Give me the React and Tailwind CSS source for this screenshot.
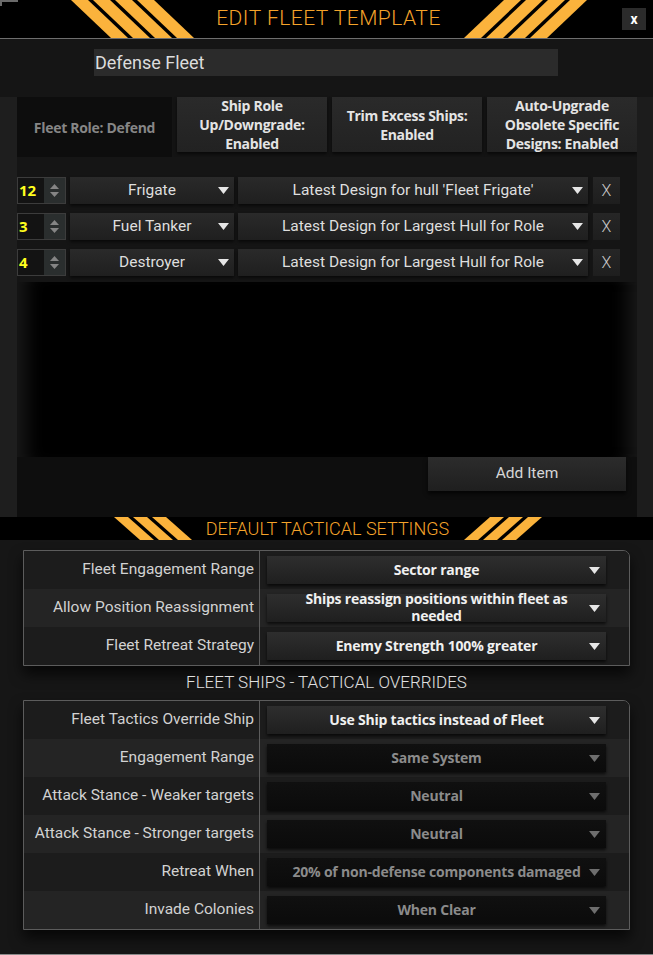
import React from 'react';

const Stripes = ({ dir, h, n, d, sw, s }) => {
  const w = (n - 1) * d + sw + s;
  const polys = [];
  for (let i = 0; i < n; i++) {
    const x = i * d;
    const pts =
      dir === 'left'
        ? `${x},0 ${x + sw},0 ${x + sw + s},${h} ${x + s},${h}`
        : `${x + s},0 ${x + s + sw},0 ${x + sw},${h} ${x},${h}`;
    polys.push(<polygon key={i} points={pts} fill="#fbb33c" />);
  }
  return (
    <svg width={w} height={h} viewBox={`0 0 ${w} ${h}`} className="block shrink-0">
      {polys}
    </svg>
  );
};

const Arrow = ({ color = '#e6e6e6' }) => (
  <svg width="11" height="7" viewBox="0 0 11 7" className="shrink-0">
    <polygon points="0,0 11,0 5.5,7" fill={color} />
  </svg>
);

const shipRows = [
  { qty: '12', role: 'Frigate', design: "Latest Design for hull 'Fleet Frigate'" },
  { qty: '3', role: 'Fuel Tanker', design: 'Latest Design for Largest Hull for Role' },
  { qty: '4', role: 'Destroyer', design: 'Latest Design for Largest Hull for Role' },
];

const fleetSettings = [
  { label: 'Fleet Engagement Range', value: 'Sector range' },
  { label: 'Allow Position Reassignment', value: 'Ships reassign positions within fleet as needed' },
  { label: 'Fleet Retreat Strategy', value: 'Enemy Strength 100% greater' },
];

const overrides = [
  { label: 'Fleet Tactics Override Ship', value: 'Use Ship tactics instead of Fleet' },
  { label: 'Engagement Range', value: 'Same System', disabled: true },
  { label: 'Attack Stance - Weaker targets', value: 'Neutral', disabled: true },
  { label: 'Attack Stance - Stronger targets', value: 'Neutral', disabled: true },
  { label: 'Retreat When', value: '20% of non-defense components damaged', disabled: true },
  { label: 'Invade Colonies', value: 'When Clear', disabled: true },
];

const SettingsTable = ({ rows }) => (
  <div className="mx-[23px] w-[607px] border border-[#5c5c5c] rounded-tr-[7px] overflow-hidden shadow-[0_8px_14px_rgba(0,0,0,0.7)]">
    {rows.map((row, i) => (
      <div
        key={row.label}
        className={`flex h-[38px] ${i % 2 === 0 ? 'bg-[#1c1c1c]' : 'bg-[#242424]'}`}
      >
        <div className="w-[236px] shrink-0 border-r border-[#5c5c5c] flex items-center justify-end pr-[5px] text-[15.5px] text-[#d2d2d2] whitespace-nowrap">
          {row.label}
        </div>
        <div className="flex-1 flex items-center pl-[7px] pr-[23px]">
          <div
            className={`flex-1 h-[28px] flex items-center pl-[17px] pr-[6px] shadow-[0_2px_3px_rgba(0,0,0,0.7)] ${
              row.disabled
                ? 'bg-gradient-to-b from-[#101010] to-[#0b0b0b]'
                : 'bg-gradient-to-b from-[#2e2e2e] to-[#1f1f1f]'
            }`}
          >
            <div
              className={`flex-1 text-center font-['Open_Sans',sans-serif] font-bold text-[14px] leading-[17px] tracking-[-0.2px] pb-[2px] ${
                row.disabled ? 'text-[#8b8b8b]' : 'text-[#f0f0f0]'
              }`}
            >
              {row.value}
            </div>
            <Arrow color={row.disabled ? '#6e6e6e' : '#e6e6e6'} />
          </div>
        </div>
      </div>
    ))}
  </div>
);

export default function App() {
  return (
    <div className="w-[653px] h-[955px] bg-[#1b1b1b] font-['Roboto',sans-serif] relative overflow-hidden flex flex-col">
      {/* corner bracket */}
      <div className="absolute left-0 top-0 w-[18px] h-[6px] border-l-2 border-t-2 border-[#6a6a6a]" />

      {/* Header */}
      <div className="h-[39px] shrink-0 bg-black border-b border-[#6e6e6e] flex items-center justify-center pl-[4px] gap-[20px]">
        <Stripes dir="left" h={38} n={4} d={22} sw={17} s={40} />
        <div className="w-[230px] text-center text-[21px] font-light tracking-[0.5px] text-[#f5a32a] whitespace-nowrap">
          EDIT FLEET TEMPLATE
        </div>
        <Stripes dir="right" h={38} n={4} d={22} sw={17} s={40} />
      </div>
      <button className="absolute right-[7px] top-[8px] w-[24px] h-[22px] bg-[#2b2b2b] text-white font-bold text-[14px] leading-none flex items-center justify-center">
        x
      </button>

      {/* Name */}
      <div className="h-[58px] shrink-0 bg-[#151515] pt-[10px] pl-[94px]">
        <div className="w-[464px] h-[27px] bg-[#2b2b2b] flex items-center pl-[1px] text-[18px] text-[#dcdcdc]">
          Defense Fleet
        </div>
      </div>

      {/* Template panel */}
      <div className="shrink-0 flex">
        <div className="w-[17px] bg-[#1e1e1e]" />
        <div className="w-[620px] flex flex-col">
          {/* options row */}
          <div className="h-[60px] bg-[#141414] flex gap-[4px] font-['Open_Sans',sans-serif] font-bold text-[14px] tracking-[-0.3px]">
            <div className="w-[155px] bg-[#0d0d0d] flex items-center justify-center text-[#868686]">
              Fleet Role: Defend
            </div>
            {[
              ['Ship Role', 'Up/Downgrade:', 'Enabled'],
              ['Trim Excess Ships:', 'Enabled'],
              ['Auto-Upgrade', 'Obsolete Specific', 'Designs: Enabled'],
            ].map((lines, i) => (
              <div
                key={i}
                className="w-[150px] h-[55px] ml-[1px] bg-gradient-to-b from-[#2a2a2a] to-[#222222] shadow-[0_2px_3px_rgba(0,0,0,0.6)] flex flex-col items-center justify-center leading-[19px] text-[#e4e4e4]"
              >
                {lines.map((l) => (
                  <div key={l}>{l}</div>
                ))}
              </div>
            ))}
          </div>

          {/* ship list */}
          <div className="bg-[#151515] pt-[20px] pb-[6px] flex flex-col gap-[9px]">
            {shipRows.map((r) => (
              <div key={r.role} className="h-[27px] flex items-stretch">
                <div className="w-[49px] flex border border-[#3c3c3c] bg-[#131313]">
                  <div className="w-[26px] flex items-center pl-[1px] font-['Open_Sans',sans-serif] font-bold text-[15px] text-[#ffff1e]">
                    {r.qty}
                  </div>
                  <div className="flex-1 bg-[#2a2e2e] flex flex-col items-center justify-center gap-[3px]">
                    <svg width="9" height="5" viewBox="0 0 9 5">
                      <polygon points="0,5 9,5 4.5,0" fill="#858585" />
                    </svg>
                    <svg width="9" height="5" viewBox="0 0 9 5">
                      <polygon points="0,0 9,0 4.5,5" fill="#858585" />
                    </svg>
                  </div>
                </div>
                <div className="w-[164px] ml-[4px] bg-gradient-to-b from-[#2a2a2a] to-[#1f1f1f] shadow-[0_2px_3px_rgba(0,0,0,0.6)] flex items-center pl-[16px] pr-[5px]">
                  <div className="flex-1 text-center text-[15.5px] text-[#dedede]">{r.role}</div>
                  <Arrow />
                </div>
                <div className="w-[350px] ml-[4px] bg-gradient-to-b from-[#2a2a2a] to-[#1f1f1f] shadow-[0_2px_3px_rgba(0,0,0,0.6)] flex items-center pl-[16px] pr-[5px]">
                  <div className="flex-1 text-center text-[15.5px] text-[#dedede] whitespace-nowrap">
                    {r.design}
                  </div>
                  <Arrow />
                </div>
                <div className="w-[27px] ml-[5px] bg-gradient-to-b from-[#262626] to-[#1e1e1e] flex items-center justify-center text-[16px] font-light text-[#c8c8c8]">
                  X
                </div>
              </div>
            ))}
          </div>

          {/* empty list area */}
          <div className="h-[175px] bg-black shadow-[inset_22px_0_18px_-12px_rgba(30,30,30,0.8),inset_-22px_0_18px_-12px_rgba(30,30,30,0.8)]" />

          {/* add item */}
          <div className="h-[60px] bg-[#0e0e0e] flex justify-end items-start pr-[11px]">
            <button className="w-[198px] h-[34px] bg-gradient-to-b from-[#2c2c2c] to-[#1f1f1f] shadow-[0_3px_4px_rgba(0,0,0,0.7)] text-[15.5px] text-[#d6d6d6]">
              Add Item
            </button>
          </div>
        </div>
        <div className="flex-1 bg-[#1c1c1c]" />
      </div>

      {/* Tactical banner */}
      <div className="h-[23px] shrink-0 bg-black flex items-center justify-center gap-[14px] pl-[2px]">
        <Stripes dir="left" h={23} n={3} d={19} sw={14} s={26} />
        <div className="w-[244px] text-center text-[18px] font-light text-[#f5a32a] whitespace-nowrap">
          DEFAULT TACTICAL SETTINGS
        </div>
        <Stripes dir="right" h={23} n={3} d={19} sw={14} s={26} />
      </div>

      {/* Tactical settings */}
      <div className="flex-1 bg-[#161616] pt-[10px] border-b border-[#8a8a8a]">
        <SettingsTable rows={fleetSettings} />
        <div className="h-[34px] flex items-center justify-center text-[17px] font-light text-[#e0e0e0]">
          FLEET SHIPS - TACTICAL OVERRIDES
        </div>
        <SettingsTable rows={overrides} />
      </div>
    </div>
  );
}
